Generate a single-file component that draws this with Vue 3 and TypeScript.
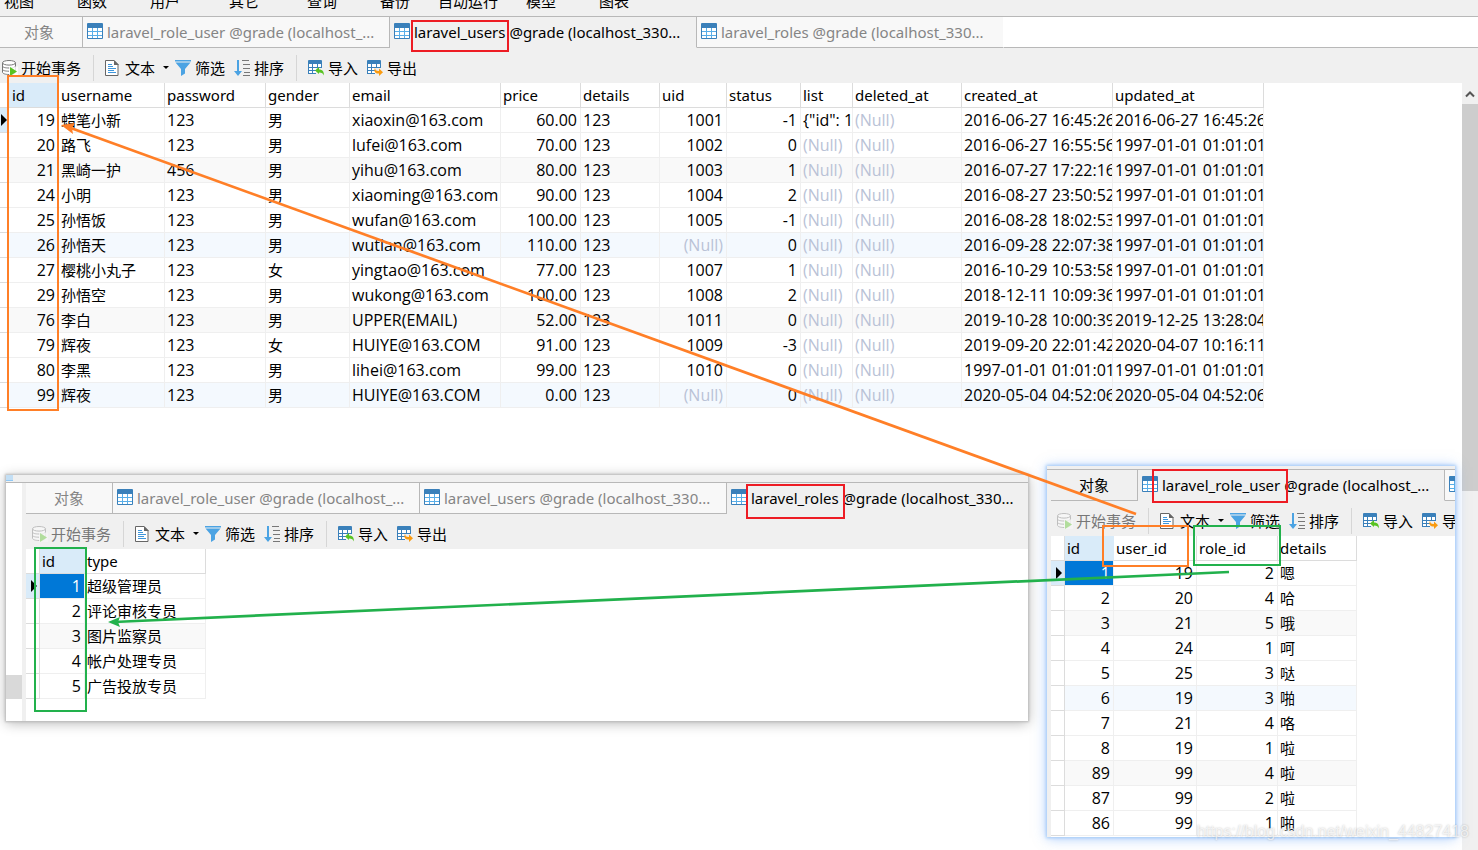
<script setup lang="ts">
interface Column {
  name: string
  width: number
  right?: boolean
  cjk?: boolean
}

interface Tab {
  label: string
  active?: boolean
}

interface Pane {
  id: string
  busy: boolean
  tabs: Tab[]
  gutter: number
  columns: Column[]
  rows: (string | null)[][]
  selected: boolean
}

const menus = ['视图', '函数', '用户', '其它', '查询', '备份', '自动运行', '模型', '图表']

const roleUserTab = 'laravel_role_user @grade (localhost_...'
const usersTab = 'laravel_users @grade (localhost_330...'
const rolesTab = 'laravel_roles @grade (localhost_330...'

const old = '1997-01-01 01:01:01'

const panes: Pane[] = [
  {
    id: 'users',
    busy: false,
    selected: false,
    tabs: [{ label: roleUserTab }, { label: usersTab, active: true }, { label: rolesTab }],
    gutter: 9,
    columns: [
      { name: 'id', width: 50, right: true },
      { name: 'username', width: 106, cjk: true },
      { name: 'password', width: 101 },
      { name: 'gender', width: 84, cjk: true },
      { name: 'email', width: 151 },
      { name: 'price', width: 80, right: true },
      { name: 'details', width: 79 },
      { name: 'uid', width: 67, right: true },
      { name: 'status', width: 74, right: true },
      { name: 'list', width: 52 },
      { name: 'deleted_at', width: 109 },
      { name: 'created_at', width: 151 },
      { name: 'updated_at', width: 151 },
    ],
    rows: [
      ['19', '蜡笔小新', '123', '男', 'xiaoxin@163.com', '60.00', '123', '1001', '-1', '{"id": 1', null, '2016-06-27 16:45:26', '2016-06-27 16:45:26'],
      ['20', '路飞', '123', '男', 'lufei@163.com', '70.00', '123', '1002', '0', null, null, '2016-06-27 16:55:56', old],
      ['21', '黑崎一护', '456', '男', 'yihu@163.com', '80.00', '123', '1003', '1', null, null, '2016-07-27 17:22:16', old],
      ['24', '小明', '123', '男', 'xiaoming@163.com', '90.00', '123', '1004', '2', null, null, '2016-08-27 23:50:52', old],
      ['25', '孙悟饭', '123', '男', 'wufan@163.com', '100.00', '123', '1005', '-1', null, null, '2016-08-28 18:02:53', old],
      ['26', '孙悟天', '123', '男', 'wutian@163.com', '110.00', '123', null, '0', null, null, '2016-09-28 22:07:38', old],
      ['27', '樱桃小丸子', '123', '女', 'yingtao@163.com', '77.00', '123', '1007', '1', null, null, '2016-10-29 10:53:58', old],
      ['29', '孙悟空', '123', '男', 'wukong@163.com', '100.00', '123', '1008', '2', null, null, '2018-12-11 10:09:36', old],
      ['76', '李白', '123', '男', 'UPPER(EMAIL)', '52.00', '123', '1011', '0', null, null, '2019-10-28 10:00:39', '2019-12-25 13:28:04'],
      ['79', '辉夜', '123', '女', 'HUIYE@163.COM', '91.00', '123', '1009', '-3', null, null, '2019-09-20 22:01:42', '2020-04-07 10:16:11'],
      ['80', '李黑', '123', '男', 'lihei@163.com', '99.00', '123', '1010', '0', null, null, old, old],
      ['99', '辉夜', '123', '男', 'HUIYE@163.COM', '0.00', '123', null, '0', null, null, '2020-05-04 04:52:06', '2020-05-04 04:52:06'],
    ],
  },
  {
    id: 'roles',
    busy: true,
    selected: true,
    tabs: [{ label: roleUserTab }, { label: usersTab }, { label: rolesTab, active: true }],
    gutter: 14,
    columns: [
      { name: 'id', width: 45, right: true },
      { name: 'type', width: 121, cjk: true },
    ],
    rows: [
      ['1', '超级管理员'],
      ['2', '评论审核专员'],
      ['3', '图片监察员'],
      ['4', '帐户处理专员'],
      ['5', '广告投放专员'],
    ],
  },
  {
    id: 'role-user',
    busy: true,
    selected: true,
    tabs: [{ label: roleUserTab, active: true }, { label: usersTab }],
    gutter: 14,
    columns: [
      { name: 'id', width: 49, right: true },
      { name: 'user_id', width: 83, right: true },
      { name: 'role_id', width: 81, right: true },
      { name: 'details', width: 79, cjk: true },
    ],
    rows: [
      ['1', '19', '2', '嗯'],
      ['2', '20', '4', '哈'],
      ['3', '21', '5', '哦'],
      ['4', '24', '1', '呵'],
      ['5', '25', '3', '哒'],
      ['6', '19', '3', '啪'],
      ['7', '21', '4', '咯'],
      ['8', '19', '1', '啦'],
      ['89', '99', '4', '啦'],
      ['87', '99', '2', '啦'],
      ['86', '99', '1', '啪'],
    ],
  },
]

const tableWidth = (p: Pane) => p.gutter + p.columns.reduce((sum, c) => sum + c.width, 0)
</script>

<template>
  <div class="desktop">
    <svg class="defs" aria-hidden="true">
      <symbol id="i-grid" viewBox="0 0 16 16">
        <rect width="16" height="16" rx="1" fill="#3a80ba" />
        <path fill="#59aee8" d="M1 5h14v10H1z" />
        <path fill="#fff" d="M1 5h4v3H1zM6 5h4v3H6zM11 5h4v3h-4zM1 9h4v3H1zM6 9h4v3H6zM11 9h4v3h-4zM1 13h4v2H1zM6 13h4v2H6zM11 13h4v2h-4z" />
      </symbol>
      <symbol id="i-begin" viewBox="0 0 16 16">
        <path fill="#fff" stroke="#777" d="M.5 2.8v9.4c0 1.300 2.800 2.300 6.500 2.300s6.500-1 6.500-2.300V2.800" />
        <ellipse cx="7" cy="2.800" rx="6.500" ry="2.300" fill="#fff" stroke="#777" />
        <path fill="none" stroke="#777" d="M.5 6c0 1.300 2.800 2 6.500 2s6.500-.7 6.500-2M.5 9.200c0 1.300 2.800 2 6.500 2" />
        <path fill="#fff" d="M7 6.500h9V16H7z" opacity=".8" />
        <path fill="#58c322" d="M8 7v9l7-4.500z" />
      </symbol>
      <symbol id="i-doc" viewBox="0 0 14 16">
        <path fill="#fff" stroke="#666" d="M.5.5h8.500l4 4v11H.5z" />
        <path fill="#666" d="M9 0v5h5z" />
        <path stroke="#3e96dc" d="M3 4.500h4M3 6.500h5M3 8.500h8M3 10.500h6M3 12.500h8" />
      </symbol>
      <symbol id="i-funnel" viewBox="0 0 16 16">
        <path fill="#4ba3e3" d="M0 0h16v1.500H0zM.5 2.500h15L10 9v4.500L6 16V9z" />
      </symbol>
      <symbol id="i-sort" viewBox="0 0 16 16">
        <path fill="#4ba3e3" d="M3 0h2v11h3l-4 5-4-5h3z" />
        <path stroke="#777" d="M8 .5h7M9 4.500h7M9 8.500h7M10 12.500h6M9 15.500h7" />
      </symbol>
      <symbol id="i-import" viewBox="0 0 16 16">
        <path fill="#3a80ba" d="M1 0h12q1 0 1 1v7H8v6H0V1q0-1 1-1z" />
        <path fill="#fff" d="M1 4h3v3H1zM5 4h4v3H5zM10 4h3v3h-3zM1 8h3v2H1zM5 8h3v2H5zM1 11h3v2H1zM5 11h3v2H5z" />
        <path fill="#58c322" d="M7 10.500l4-3.500v2.500c3.500 0 5 2 5 6-1-2-2-3-5-3V14z" />
      </symbol>
      <symbol id="i-export" viewBox="0 0 16 16">
        <path fill="#3a80ba" d="M1 0h12q1 0 1 1v7H8v6H0V1q0-1 1-1z" />
        <path fill="#fff" d="M1 4h3v3H1zM5 4h4v3H5zM10 4h3v3h-3zM1 8h3v2H1zM5 8h3v2H5zM1 11h3v2H1zM5 11h3v2H5z" />
        <path fill="#fa9b10" d="M8 7.500c0 2.500 1 3.500 4 3.500V8.500l4 3.700-4 3.800v-2.500c-4 0-5.500-2-4-6z" />
      </symbol>
    </svg>

    <nav class="menubar" aria-label="菜单">
      <button v-for="m in menus" :key="m" type="button">{{ m }}</button>
    </nav>

    <section v-for="p in panes" :key="p.id" class="pane" :class="p.id">
      <div v-if="p.id !== 'users'" class="caption"><i></i></div>
      <div class="frame">
        <div class="edge"><i></i></div>
        <div class="content">
          <div class="tabs" role="tablist">
            <button type="button" role="tab" class="tab objects">对象</button>
            <button
              v-for="t in p.tabs"
              :key="t.label"
              type="button"
              role="tab"
              class="tab"
              :class="{ active: t.active }"
              :aria-selected="!!t.active"
            >
              <svg width="16" height="16" aria-hidden="true"><use href="#i-grid" /></svg>
              <span>{{ t.label }}</span>
            </button>
            <div class="rest"></div>
          </div>

          <div class="toolbar">
            <button type="button" class="begin" :disabled="p.busy">
              <svg width="16" height="16" aria-hidden="true"><use href="#i-begin" /></svg>开始事务
            </button>
            <span class="sep"></span>
            <button type="button" class="text">
              <svg width="14" height="16" aria-hidden="true"><use href="#i-doc" /></svg>文本<i class="caret"></i>
            </button>
            <button type="button" class="filter">
              <svg width="16" height="16" aria-hidden="true"><use href="#i-funnel" /></svg>筛选
            </button>
            <button type="button" class="sort">
              <svg width="16" height="16" aria-hidden="true"><use href="#i-sort" /></svg>排序
            </button>
            <span class="sep"></span>
            <button type="button" class="import">
              <svg width="16" height="16" aria-hidden="true"><use href="#i-import" /></svg>导入
            </button>
            <button type="button" class="export">
              <svg width="16" height="16" aria-hidden="true"><use href="#i-export" /></svg>导出
            </button>
          </div>

          <div class="body">
            <div class="sheet">
              <table :style="{ width: tableWidth(p) + 'px' }">
                <colgroup>
                  <col :style="{ width: p.gutter + 'px' }" />
                  <col v-for="c in p.columns" :key="c.name" :style="{ width: c.width + 'px' }" />
                </colgroup>
                <thead>
                  <tr>
                    <td class="gutter"></td>
                    <th v-for="c in p.columns" :key="c.name" scope="col" :class="{ key: c.name === 'id' }">{{ c.name }}</th>
                  </tr>
                </thead>
                <tbody>
                  <tr v-for="(row, r) in p.rows" :key="r" :class="{ current: r === 0 }">
                    <td class="gutter"><i v-if="r === 0" class="pointer"></i></td>
                    <td
                      v-for="(cell, c) in row"
                      :key="c"
                      :class="{
                        right: p.columns[c].right,
                        cjk: p.columns[c].cjk,
                        none: cell === null,
                        selected: p.selected && r === 0 && c === 0,
                      }"
                    >{{ cell ?? '(Null)' }}</td>
                  </tr>
                </tbody>
              </table>
            </div>
            <div v-if="p.id === 'users'" class="scrollbar">
              <button type="button" aria-label="向上滚动">
                <svg width="10" height="8" viewBox="0 0 10 8" aria-hidden="true">
                  <path d="M1 6.500l4-4 4 4" fill="none" stroke="#555" stroke-width="2" />
                </svg>
              </button>
              <div class="thumb"></div>
            </div>
          </div>
        </div>
      </div>
    </section>

    <svg class="marks" width="1478" height="850" viewBox="0 0 1478 850" fill="none" stroke-width="2" aria-hidden="true">
      <g stroke="#ed1c24">
        <rect x="412" y="21" width="96" height="30" />
        <rect x="747" y="485" width="97" height="33" />
        <rect x="1153" y="470" width="134" height="32" />
      </g>
      <g stroke="#ff7f27">
        <rect x="8" y="76" width="50" height="334" />
        <rect x="1103" y="526" width="85" height="40" />
        <path d="M1136 514L68 127" stroke-width="2.700" />
        <path d="M61 125l14-2-3 5 1 6z" fill="#ff7f27" stroke="none" />
      </g>
      <g stroke="#22b14c">
        <rect x="35" y="548" width="51" height="163" />
        <rect x="1194" y="526" width="86" height="39" />
        <path d="M1229 572L114 622" stroke-width="2.700" />
        <path d="M108 622l12-5-2 5 2 5z" fill="#22b14c" stroke="none" />
      </g>
    </svg>
    <div class="watermark">https://blog.csdn.net/weixin_44827418</div>
  </div>
</template>

<style>
body {
  margin: 0;
}
</style>

<style scoped>
.desktop {
  position: relative;
  display: flex;
  flex-direction: column;
  height: 100vh;
  overflow: hidden;
  background: #fff;
  color: #000;
  font: 15px/24px "Noto Sans", "Noto Sans CJK SC", sans-serif;
}
.defs {
  position: absolute;
  width: 0;
  height: 0;
}
button {
  margin: 0;
  padding: 0;
  border: 0;
  background: none;
  color: inherit;
  font: inherit;
  white-space: nowrap;
}
.menubar {
  display: grid;
  grid-template-columns: 73px 73px 79px 78px 73px 58px 88px 73px 60px;
  flex: none;
  height: 16px;
  padding-left: 4px;
  overflow: hidden;
  background: #f0f0f0;
}
.menubar button {
  margin-top: -11px;
  height: 24px;
  text-align: left;
}
.pane {
  display: flex;
  flex-direction: column;
  box-sizing: border-box;
}
.users {
  flex: 1;
  min-height: 0;
}
.roles,
.role-user {
  position: absolute;
  overflow: hidden;
  background: #fff;
}
.roles {
  left: 6px;
  top: 475px;
  width: 1022px;
  height: 246px;
  box-shadow: 0 0 2px 1px #bbb, 0 2px 12px rgba(0, 0, 0, 0.3);
}
.role-user {
  left: 1047px;
  top: 466px;
  width: 408px;
  height: 371px;
  box-shadow: 0 0 3px 1px #a5cbf7, 0 1px 12px rgba(80, 150, 250, 0.5);
}
.caption {
  flex: none;
  height: 7px;
  background: #f0f0f0;
}
.caption i {
  display: block;
  width: 7px;
  height: 5px;
  border-bottom: 1px solid #8fc8f5;
  background: #c3dff5;
}
.role-user .caption {
  height: 3px;
}
.role-user .caption i {
  display: none;
}
.frame {
  display: flex;
  flex: 1;
  min-height: 0;
  border-top: 1px solid #b8b8b8;
}
.edge {
  display: none;
}
.roles .edge,
.role-user .edge {
  display: block;
  flex: none;
  box-sizing: border-box;
  width: 20px;
  border-right: 4px solid #f0f0f0;
}
.role-user .edge {
  width: 4px;
}
.roles .edge i {
  display: block;
  height: 24px;
  margin-top: 192px;
  background: #d9d9d9;
}
.content {
  display: flex;
  flex: 1;
  flex-direction: column;
  min-width: 0;
}
.tabs {
  display: flex;
  flex: none;
  height: 31px;
}
.tab {
  display: flex;
  flex: none;
  align-items: center;
  gap: 4px;
  box-sizing: border-box;
  width: 307px;
  padding-left: 4px;
  border-right: 1px solid #b8b8b8;
  border-bottom: 1px solid #b8b8b8;
  background: #f8f8f8;
  color: #858585;
}
.tab svg {
  flex: none;
  margin-bottom: 2px;
}
.tab.objects {
  justify-content: center;
  width: 87px;
  padding: 0;
}
.users .objects {
  width: 83px;
  padding-right: 4px;
}
.users .tab:nth-child(4) {
  border-right-color: #fff;
}
.tab.active {
  border-bottom-color: #f0f0f0;
  background: #f0f0f0;
  color: #000;
}
.roles .tab.active {
  border-right-color: #f0f0f0;
}
.role-user .objects {
  background: #f0f0f0;
  color: #000;
}
.rest {
  flex: 1;
  border-bottom: 1px solid #b8b8b8;
}
.toolbar {
  display: flex;
  flex: none;
  align-items: center;
  height: 35px;
  padding-left: 6px;
  overflow: hidden;
  background: #f0f0f0;
}
.users .toolbar {
  padding-left: 2px;
}
.toolbar button {
  display: flex;
  flex: none;
  align-items: center;
  gap: 4px;
  margin-right: 9px;
  padding-top: 4px;
}
.toolbar .begin {
  gap: 3px;
  margin-right: 12px;
}
.toolbar .begin:disabled {
  color: #777;
}
.begin:disabled svg {
  opacity: 0.4;
}
.toolbar .text {
  gap: 6px;
  margin-right: 6px;
}
.toolbar .sort {
  margin-right: 12px;
}
.sep {
  flex: none;
  width: 1px;
  height: 26px;
  margin: 4px 11px 0 0;
  background: #d6d6d6;
}
.caret {
  margin-left: 2px;
  border: 3px solid transparent;
  border-top-color: #000;
  border-bottom: 0;
}
.body {
  display: flex;
  flex: 1;
  min-height: 0;
}
.sheet {
  flex: 1;
  min-width: 0;
  overflow: hidden;
}
table {
  table-layout: fixed;
  border-collapse: separate;
  border-spacing: 0;
}
th,
td {
  box-sizing: border-box;
  height: 25px;
  padding: 0 2px;
  overflow: hidden;
  border-right: 1px solid #efefef;
  border-bottom: 1px solid #efefef;
  font-size: 16px;
  font-weight: 400;
  line-height: 24px;
  text-align: left;
  white-space: nowrap;
}
td {
  font-family: "Open Sans", "Noto Sans CJK SC", sans-serif;
}
th {
  border-color: #dcdcdc;
  font-size: 15px;
}
th.key {
  border-right-color: #d9ebf9;
  background: #d9ebf9;
}
.users th.key {
  padding-left: 3px;
}
td:not(.right) {
  padding-right: 0;
}
td.right {
  padding-right: 3px;
  text-align: right;
}
td.cjk {
  font-size: 15px;
}
td.none {
  color: #b9c2d6;
}
tbody tr:nth-child(6n + 3) td {
  background: #f9f9f9;
}
tbody tr:nth-child(6n) td {
  background: #f4f9fe;
}
tbody tr .gutter.gutter,
thead .gutter {
  padding: 0;
  border-color: #dcdcdc;
  background: #fff;
}
tbody .current .gutter.gutter {
  background: #d9ebf9;
}
.pointer {
  display: block;
  width: 0;
  margin-left: 5px;
  border: 6px solid transparent;
  border-left-color: #000;
  border-right: 0;
}
.users .pointer {
  margin-left: 1px;
}
td.selected {
  background: #0078d7;
  color: #fff;
}
.scrollbar {
  flex: none;
  width: 16px;
  background: #f0f0f0;
}
.scrollbar button {
  display: flex;
  align-items: center;
  justify-content: center;
  width: 100%;
  height: 21px;
}
.thumb {
  height: 387px;
  background: #cdcdcd;
}
.marks {
  position: absolute;
  top: 0;
  left: 0;
}
.watermark {
  position: absolute;
  right: 9px;
  bottom: 7px;
  color: rgba(255, 255, 255, 0.7);
  font: 16px/22px "Liberation Sans", sans-serif;
  text-shadow: 0 0 2px rgba(0, 0, 0, 0.25);
}
</style>
